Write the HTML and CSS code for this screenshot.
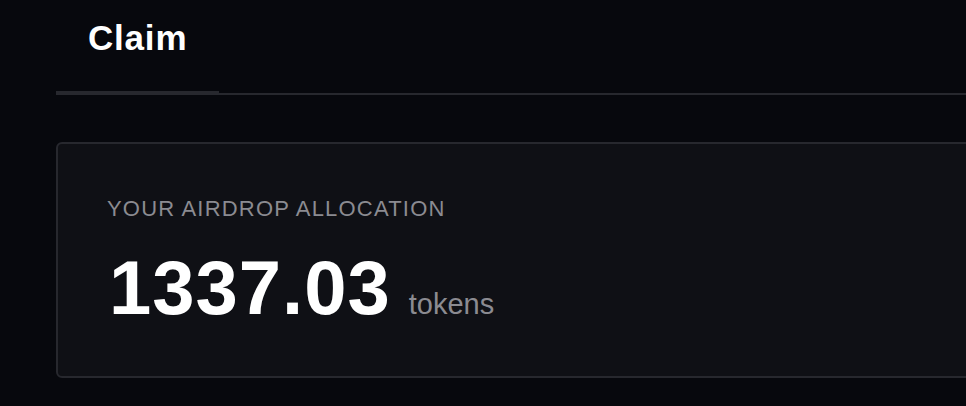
FILE: index.html
```html
<!DOCTYPE html>
<html lang="en">
<head>
  <meta charset="UTF-8">
  <meta name="viewport" content="width=device-width, initial-scale=1.0">
  <title>Claim</title>
  <link rel="stylesheet" href="styles.css">
</head>
<body>
  <div class="pg_wrap">
    <nav class="tab_bar">
      <button class="tab_itm is_active">Claim</button>
    </nav>

    <section class="alloc_card">
      <p class="alloc_lbl">Your airdrop allocation</p>
      <div class="alloc_amt">
        <span class="alloc_num">1337.03</span>
        <span class="alloc_unit">tokens</span>
      </div>
    </section>
  </div>
</body>
</html>
```

FILE: styles.css
```css
:root {
  --bg: #07080d;
  --card: #0f1015;
  --line: #27282e;
  --fg: #ffffff;
  --muted: #8b8b91;
}

body {
  margin: 0;
  background-color: var(--bg);
  color: var(--fg);
  font-family: 'Liberation Sans', Arial, sans-serif;
  overflow: hidden;
}

.pg_wrap {
  padding-left: 56px;
  margin-right: -40px;
}

.tab_bar {
  display: flex;
  border-bottom: 2px solid var(--line);
}

.tab_itm {
  background: none;
  border: none;
  color: var(--fg);
  font-family: inherit;
  font-size: 35px;
  font-weight: 700;
  letter-spacing: 0.8px;
  line-height: 40px;
  padding: 18px 32px 33px;
  margin-bottom: -2px;
  border-bottom: 4px solid transparent;
  cursor: pointer;
}

.tab_itm.is_active { border-bottom-color: var(--line); }

.alloc_card {
  margin-top: 47px;
  background-color: var(--card);
  border: 2px solid var(--line);
  border-radius: 6px;
  padding: 51px 49px 50px;
}

.alloc_lbl {
  margin: 0;
  font-size: 22px;
  line-height: 28px;
  letter-spacing: 1.2px;
  text-transform: uppercase;
  color: var(--muted);
}

.alloc_amt {
  display: flex;
  align-items: baseline;
  gap: 18px;
  margin-top: 27px;
}

.alloc_num {
  margin-left: 2px;
  font-size: 76px;
  font-weight: 700;
  letter-spacing: 1px;
  line-height: 1;
}

.alloc_unit {
  font-size: 29px;
  color: var(--muted);
}
```
